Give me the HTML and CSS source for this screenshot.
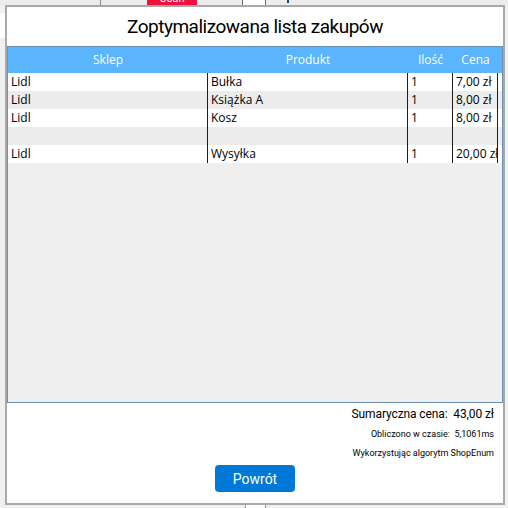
FILE: index.html
```html
<!DOCTYPE html>
<html lang="pl">
<head>
<meta charset="utf-8">
<title>Zoptymalizowana lista zakupów</title>
<link rel="stylesheet" href="styles.css">
</head>
<body>
<div class="backdrop">
  <div class="bg-top">
    <div class="bg-left-white"></div>
    <div class="bg-line bl1"></div>
    <div class="bg-delete">Usuń</div>
    <div class="bg-cell"></div>
    <div class="bg-mark"></div>
  </div>
  <div class="bg-bottom">
    <div class="bg-bcell"></div>
  </div>
</div>

<div class="dialog">
  <h1 class="title">Zoptymalizowana lista zakupów</h1>
  <div class="grid">
    <div class="row head">
      <div class="c c1">Sklep</div>
      <div class="c c2">Produkt</div>
      <div class="c c3">Ilość</div>
      <div class="c c4">Cena</div>
    </div>
    <div class="row">
      <div class="c c1">Lidl</div>
      <div class="c c2">Bułka</div>
      <div class="c c3">1</div>
      <div class="c c4">7,00 zł</div>
    </div>
    <div class="row alt">
      <div class="c c1">Lidl</div>
      <div class="c c2">Książka A</div>
      <div class="c c3">1</div>
      <div class="c c4">8,00 zł</div>
    </div>
    <div class="row">
      <div class="c c1">Lidl</div>
      <div class="c c2">Kosz</div>
      <div class="c c3">1</div>
      <div class="c c4">8,00 zł</div>
    </div>
    <div class="row alt">
      <div class="c c1"></div>
      <div class="c c2"></div>
      <div class="c c3"></div>
      <div class="c c4"></div>
    </div>
    <div class="row">
      <div class="c c1">Lidl</div>
      <div class="c c2">Wysyłka</div>
      <div class="c c3">1</div>
      <div class="c c4">20,00 zł</div>
    </div>
  </div>
  <div class="summary">
    <div class="sum-line">Sumaryczna cena:&nbsp; 43,00 zł</div>
    <div class="info-line">Obliczono w czasie:&nbsp; 5,1061ms</div>
    <div class="info-line">Wykorzystując algorytm ShopEnum</div>
  </div>
  <div class="actions">
    <button class="btn">Powrót</button>
  </div>
</div>
</body>
</html>
```

FILE: styles.css
```css
html, body {
  margin: 0;
  padding: 0;
}
body {
  width: 508px;
  height: 508px;
  background: #f0f0f0;
  position: relative;
  overflow: hidden;
  font-family: "Open Sans", "Noto Sans", sans-serif;
}

/* backdrop fragments of the underlying window */
.backdrop {
  height: 508px;
  display: flex;
  flex-direction: column;
  justify-content: space-between;
}
.bg-top {
  height: 5px;
  position: relative;
  background: #ececec;
}
.bg-left-white {
  position: absolute;
  left: 0;
  top: 13px;
  width: 5px;
  height: 25px;
  background: #ffffff;
}
.bg-line {
  position: absolute;
  top: 0;
  width: 1px;
  height: 5px;
  background: #8a8a8a;
}
.bl1 { left: 100px; }
.bg-delete {
  position: absolute;
  left: 147px;
  top: -7px;
  width: 50px;
  height: 12px;
  background: #f0103c;
  color: #fff;
  font-family: Roboto, sans-serif;
  font-size: 11px;
  line-height: 12px;
  text-align: center;
}
.bg-cell {
  position: absolute;
  left: 242px;
  top: 0;
  width: 22px;
  height: 5px;
  background: #fff;
  border-left: 1px solid #6a6a6a;
  border-right: 1px solid #6a6a6a;
}
.bg-mark {
  position: absolute;
  left: 287px;
  top: 0;
  width: 2px;
  height: 3px;
  background: #1a3f8f;
}
.bg-bottom {
  height: 3px;
  position: relative;
}
.bg-bcell {
  position: absolute;
  left: 245px;
  top: 0;
  width: 19px;
  height: 3px;
  background: #fff;
  border-left: 1px solid #7a9cc0;
  border-right: 1px solid #8a8a8a;
}

/* dialog */
.dialog {
  position: absolute;
  left: 5px;
  top: 5px;
  width: 500px;
  height: 500px;
  box-sizing: border-box;
  border: 2px solid #a9a9a9;
  background: #ffffff;
  display: flex;
  flex-direction: column;
}
.title {
  margin: 0;
  height: 39px;
  font-family: Roboto, "Open Sans", sans-serif;
  font-size: 19px;
  font-weight: 400;
  letter-spacing: -0.5px;
  line-height: 40px;
  text-align: center;
  color: #000;
}
.grid {
  height: 357px;
  box-sizing: border-box;
  border: 1px solid #6a8fb5;
  background: #efefef;
  display: flex;
  flex-direction: column;
}
.row {
  display: flex;
  height: 18px;
  background: #ffffff;
  font-size: 12px;
  line-height: 18px;
  color: #000;
}
.row.alt {
  background: #ececec;
}
.row.head {
  height: 26px;
  line-height: 26px;
  background: #5ab4fe;
  color: #fff;
}
.c {
  box-sizing: border-box;
  border-right: 1px solid #1e1e1e;
  padding-left: 3px;
  white-space: nowrap;
  overflow: hidden;
}
.c1 { width: 200px; }
.c2 { width: 200px; }
.c3 { width: 45px; }
.c4 { width: 45px; }
.head .c {
  border-right: none;
  text-align: center;
  padding: 0;
}
.summary {
  display: flex;
  flex-direction: column;
  align-items: flex-end;
  padding-right: 9px;
  color: #000;
  font-family: Roboto, "Open Sans", sans-serif;
}
.sum-line {
  height: 22px;
  line-height: 22px;
  font-size: 12px;
  letter-spacing: -0.1px;
}
.info-line {
  height: 19px;
  line-height: 19px;
  font-size: 9px;
}
.actions {
  display: flex;
  justify-content: center;
  padding-top: 2px;
}
.btn {
  width: 80px;
  height: 27px;
  border: none;
  border-radius: 4px;
  background: #0078d7;
  color: #fff;
  font-family: Roboto, "Open Sans", sans-serif;
  font-size: 14px;
  padding: 0;
}
```
